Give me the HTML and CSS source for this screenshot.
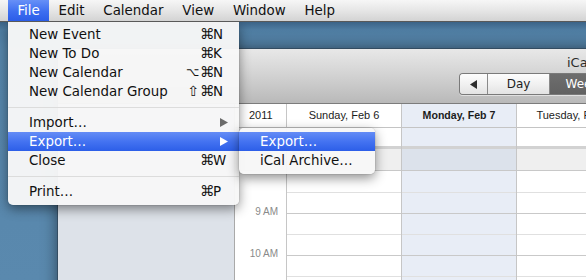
FILE: index.html
```html
<!DOCTYPE html>
<html>
<head>
<meta charset="utf-8">
<link rel="stylesheet" href="styles.css">
</head>
<body>
<div class="screen">
  <div class="menubar">
    <div class="mb-item active">File</div>
    <div class="mb-item">Edit</div>
    <div class="mb-item">Calendar</div>
    <div class="mb-item">View</div>
    <div class="mb-item">Window</div>
    <div class="mb-item">Help</div>
  </div>
  <div class="desktop">
    <div class="window">
      <div class="toolbar">
        <div class="title">iCal</div>
        <div class="segmented">
          <div class="seg seg-arrow"><svg width="8" height="9" viewBox="0 0 8 9"><path d="M7 0 L7 9 L0 4.5 Z" fill="#2e2e2e"/></svg></div>
          <div class="seg seg-day">Day</div>
          <div class="seg seg-week">Week</div>
        </div>
      </div>
      <div class="body">
        <div class="sidebar"></div>
        <div class="cal">
          <div class="col timecol">
            <div class="hdr">2011</div>
            <div class="allday"></div>
            <div class="grey"></div>
            <div class="tspace first"></div>
            <div class="tlabel">9 AM</div>
            <div class="tspace"></div>
            <div class="tlabel">10 AM</div>
          </div>
          <div class="col day">
            <div class="hdr">Sunday, Feb 6</div>
            <div class="allday"></div>
            <div class="grey"></div>
            <div class="slot half first"></div>
            <div class="slot hour"></div>
            <div class="slot half"></div>
            <div class="slot hour"></div>
            <div class="slot half"></div>
          </div>
          <div class="col day today">
            <div class="hdr">Monday, Feb 7</div>
            <div class="allday"></div>
            <div class="grey"></div>
            <div class="slot half first"></div>
            <div class="slot hour"></div>
            <div class="slot half"></div>
            <div class="slot hour"></div>
            <div class="slot half"></div>
          </div>
          <div class="col day">
            <div class="hdr">Tuesday, Feb 8</div>
            <div class="allday"></div>
            <div class="grey"></div>
            <div class="slot half first"></div>
            <div class="slot hour"></div>
            <div class="slot half"></div>
            <div class="slot hour"></div>
            <div class="slot half"></div>
          </div>
        </div>
      </div>
    </div>

    <div class="menu file-menu">
      <div class="item"><span class="label">New Event</span><span class="sc"><span class="mods"><span class="mod">⌘</span></span><span class="key">N</span></span></div>
      <div class="item"><span class="label">New To Do</span><span class="sc"><span class="mods"><span class="mod">⌘</span></span><span class="key">K</span></span></div>
      <div class="item"><span class="label">New Calendar</span><span class="sc"><span class="mods"><span class="mod opt">⌥</span><span class="mod">⌘</span></span><span class="key">N</span></span></div>
      <div class="item"><span class="label">New Calendar Group</span><span class="sc"><span class="mods"><span class="mod shift">⇧</span><span class="mod">⌘</span></span><span class="key">N</span></span></div>
      <div class="sep"></div>
      <div class="item"><span class="label">Import…</span><svg class="arrow" width="8" height="9" viewBox="0 0 8 9"><path d="M0 0 L8 4.5 L0 9 Z" fill="#6b6b6b"/></svg></div>
      <div class="item selected"><span class="label">Export…</span><svg class="arrow" width="8" height="9" viewBox="0 0 8 9"><path d="M0 0 L8 4.5 L0 9 Z" fill="#ffffff"/></svg></div>
      <div class="item"><span class="label">Close</span><span class="sc"><span class="mods"><span class="mod">⌘</span></span><span class="key">W</span></span></div>
      <div class="sep"></div>
      <div class="item"><span class="label">Print…</span><span class="sc"><span class="mods"><span class="mod">⌘</span></span><span class="key">P</span></span></div>
    </div>

    <div class="menu submenu">
      <div class="item selected"><span class="label">Export…</span></div>
      <div class="item"><span class="label">iCal Archive…</span></div>
    </div>
  </div>
</div>
</body>
</html>
```

FILE: styles.css
```css
* { box-sizing: border-box; }
html, body { margin: 0; padding: 0; }
body {
  width: 586px;
  height: 280px;
  overflow: hidden;
  font-family: "DejaVu Sans", "Liberation Sans", sans-serif;
}
.screen {
  position: relative;
  width: 586px;
  height: 280px;
  overflow: hidden;
}

/* Menu bar */
.menubar {
  height: 22px;
  display: flex;
  padding-left: 8px;
  background: linear-gradient(to bottom, #f6f6f6 0%, #e6e6e6 50%, #d3d3d3 100%);
  border-bottom: 1px solid #595959;
  font-size: 13.4px;
  color: #111;
  position: relative;
  z-index: 3;
}
.mb-item {
  height: 21px;
  line-height: 21px;
  padding: 0 9.4px;
}
.mb-item.active {
  color: #fff;
  background: linear-gradient(to bottom, #6790f7 0%, #3d6ef0 55%, #2b5de8 100%);
}

/* Desktop */
.desktop {
  position: relative;
  height: 258px;
  background: linear-gradient(to bottom, #3b6387 0px, #4f7da2 8px, #5685aa 27px, #5a89ae 100%);
}

/* iCal window */
.window {
  position: absolute;
  left: 58px;
  top: 27px;
  width: 580px;
  bottom: -20px;
  background: #fff;
  border-radius: 5px 5px 0 0;
  box-shadow: 0 0 16px rgba(0, 0, 0, 0.55), 0 0 0 1px rgba(40, 50, 60, 0.35);
  display: flex;
  flex-direction: column;
  overflow: hidden;
}
.toolbar {
  height: 55px;
  flex: none;
  padding-top: 6px;
  background: linear-gradient(to bottom, #e8e8e8 0%, #d4d4d4 45%, #b9b9b9 100%);
  border-bottom: 1px solid #7c7c7c;
}
.title {
  margin-left: 509px;
  height: 16px;
  line-height: 16px;
  font-size: 13px;
  color: #2c2c2c;
}
.segmented {
  margin-left: 401px;
  margin-top: 2px;
  height: 22px;
  display: flex;
  border: 1px solid #7a7a7a;
  border-right: none;
  border-radius: 4px 0 0 4px;
  overflow: hidden;
  font-size: 12px;
  box-shadow: 0 1px 0 rgba(255, 255, 255, 0.5);
}
.seg {
  height: 20px;
  line-height: 20px;
  text-align: center;
  color: #1e1e1e;
  background: linear-gradient(to bottom, #fdfdfd 0%, #f1f1f1 50%, #e3e3e3 100%);
  border-right: 1px solid #8a8a8a;
}
.seg-arrow {
  width: 28px;
  display: flex;
  align-items: center;
  justify-content: center;
}
.seg-day { width: 62px; }
.seg-week {
  width: 64px;
  color: #fff;
  background: linear-gradient(to bottom, #6e6e6e 0%, #626262 100%);
  border-right: none;
}

.body {
  flex: 1;
  display: flex;
}
.sidebar {
  width: 177px;
  flex: none;
  background: #dde2e9;
  border-right: 1px solid #a9a9a9;
}
.cal {
  display: flex;
  flex: 1;
  background: #fff;
  font-family: "Liberation Sans", Arial, sans-serif;
}
.col {
  flex: none;
  border-right: 1px solid #c6c6c6;
}
.timecol { width: 52px; }
.day { width: 115px; }
.today { background: #e8edf6; }
.today .hdr { font-weight: bold; font-size: 10.6px; }

.hdr {
  height: 24px;
  line-height: 23px;
  border-bottom: 1px solid #c4c4c4;
  text-align: center;
  font-size: 11px;
  color: #1c1c1c;
  white-space: nowrap;
}
.timecol .hdr { text-align: left; padding-left: 14px; }
.allday {
  height: 21px;
  border-bottom: 3px solid #d2d2d2;
}
.grey {
  height: 22px;
  background: #efefef;
  border-bottom: 1px solid #c8c8c8;
}
.today .grey { background: #dce2eb; }
.timecol .grey { background: #f2f2f2; }
.slot { height: 21px; border-bottom: 1px solid #e0e0e0; }
.slot.first { height: 22px; }
.slot.hour { border-bottom-color: #c9c9c9; }

.tspace { height: 21px; }
.tspace.first { height: 30px; }
.tlabel {
  height: 21px;
  line-height: 21px;
  text-align: right;
  padding-right: 8px;
  font-size: 10px;
  color: #8a8a8a;
}

/* Menus */
.menu {
  position: absolute;
  background: rgba(247, 247, 247, 0.97);
  box-shadow: 0 4px 12px rgba(0, 0, 0, 0.45), 0 0 0 1px rgba(0, 0, 0, 0.06);
  font-size: 13.4px;
  color: #111;
  z-index: 2;
}
.file-menu {
  left: 8px;
  top: 0;
  width: 231px;
  padding: 3px 0 4px;
  border-radius: 0 0 5px 5px;
}
.submenu {
  left: 239px;
  top: 106px;
  width: 136px;
  padding: 4px 0 4px;
  border-radius: 5px;
}
.item {
  height: 19px;
  line-height: 19px;
  display: flex;
  align-items: center;
  justify-content: space-between;
  padding: 0 11px 0 21px;
  white-space: nowrap;
}
.item.selected {
  color: #fff;
  background: linear-gradient(to bottom, #648cf6 0%, #4473f1 50%, #2c5ee8 100%);
}
.sc { display: flex; align-items: center; }
.mods { display: flex; align-items: center; margin-right: -1px; }
.mod { width: 14px; text-align: center; font-size: 14.5px; line-height: 19px; overflow: hidden; }
.mod.opt { font-size: 11.5px; }
.mod.shift { font-size: 14px; }
.key { width: 15px; text-align: left; }
.arrow { margin-right: 0; }
.sep {
  height: 1px;
  background: #dcdcdc;
  margin: 6px 0 5px;
}
```
